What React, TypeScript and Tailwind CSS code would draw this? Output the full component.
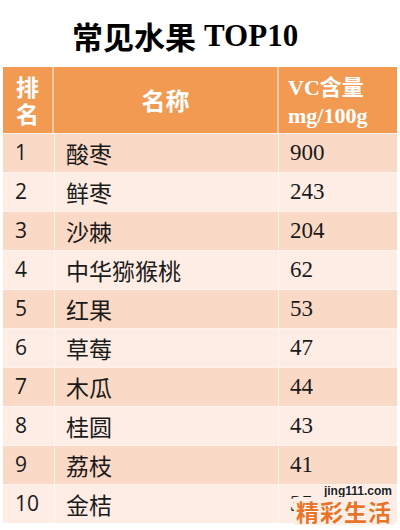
import React from 'react';

const rows = [
  ['1', '酸枣', '900'],
  ['2', '鲜枣', '243'],
  ['3', '沙棘', '204'],
  ['4', '中华猕猴桃', '62'],
  ['5', '红果', '53'],
  ['6', '草莓', '47'],
  ['7', '木瓜', '44'],
  ['8', '桂圆', '43'],
  ['9', '荔枝', '41'],
  ['10', '金桔', '35'],
];

export default function App() {
  return (
    <div className="w-[400px] h-[530px] bg-white overflow-hidden relative font-['Noto_Sans_CJK_SC',sans-serif]">
      {/* title */}
      <div className="h-[67px] flex items-center pl-[72px] pt-[4px]">
        <span className="text-[31px] font-bold leading-none text-black">常见水果</span>
        <span className="text-[31px] font-bold leading-none text-black ml-[8px] font-['Liberation_Serif',serif]">TOP10</span>
      </div>

      <div className="mx-[3px] flex flex-col gap-[1px] bg-[#fdf3ee]">
        {/* header */}
        <div className="flex h-[66px] gap-[2px] bg-[#f7c9a8] text-white font-bold">
          <div className="w-[49px] bg-[#f29a51] flex flex-col items-center justify-center text-[23px] leading-[27px]">
            <span>排</span>
            <span>名</span>
          </div>
          <div className="flex-1 bg-[#f29a51] flex items-center justify-center text-[24px]">
            名称
          </div>
          <div className="w-[118px] bg-[#f29a51] flex flex-col justify-center pl-[9px] text-[22px] leading-[28px]">
            <span><span className="font-['Liberation_Serif',serif]">VC</span>含量</span>
            <span className="font-['Liberation_Serif',serif]">mg/100g</span>
          </div>
        </div>

        {rows.map((r, i) => (
          <div key={r[0]} className={`flex h-[38px] gap-[2px] ${i % 2 === 0 ? 'bg-[#fbd9c7]' : 'bg-[#fdede5]'}`}>
            <div className="w-[49px] flex items-center pl-[12px] text-[21px] text-[#1a1a1a] font-['Open_Sans',sans-serif]">
              {r[0]}
            </div>
            <div className="w-[1px] bg-white/60" />
            <div className="flex-1 flex items-center pl-[9px] text-[23px] text-[#1a1a1a]">
              {r[1]}
            </div>
            <div className="w-[1px] bg-white/60" />
            <div className="w-[116px] flex items-center pl-[9px] text-[23px] text-[#1a1a1a] font-['Liberation_Serif',serif]">
              {r[2]}
            </div>
          </div>
        ))}
      </div>

      {/* watermark */}
      <div className="absolute right-[6px] bottom-[5px] flex flex-col items-end">
        <span className="text-[12px] font-bold leading-none text-[#222] mr-[2px] font-['Liberation_Sans',sans-serif] [text-shadow:0_0_2px_white,0_0_2px_white]">jing111.com</span>
        <span className="px-[2px] bg-[#fdede5] text-[23px] font-bold leading-[28px] text-[#e8742a] tracking-[1px] [text-shadow:0_0_2px_white,0_0_2px_white]">精彩生活</span>
      </div>
    </div>
  );
}
